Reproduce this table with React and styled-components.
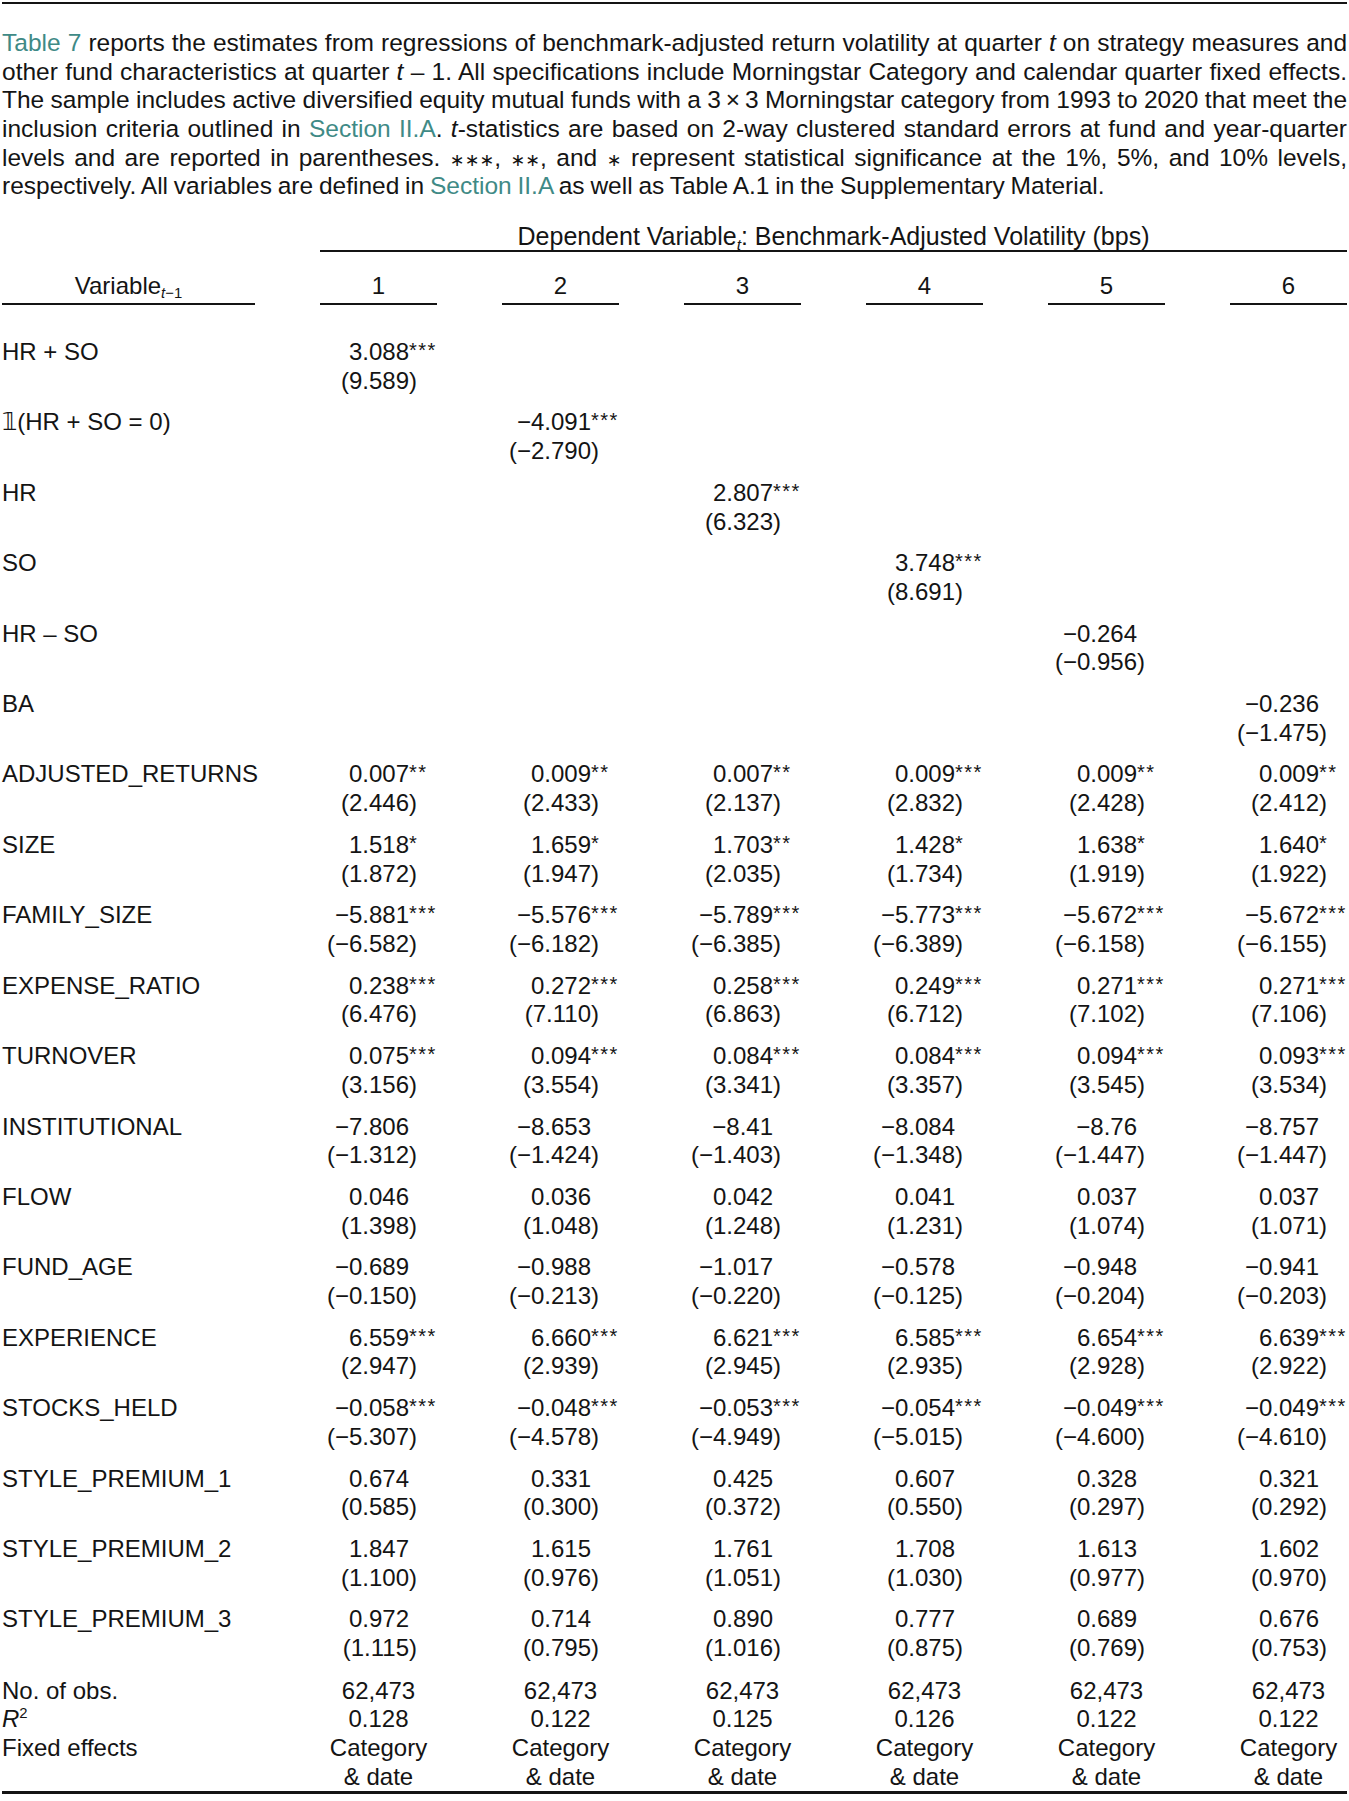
import React from "react";
import styled, { createGlobalStyle } from "styled-components";

const GlobalStyle = createGlobalStyle`
  body {
    margin: 0;
    background: #fff;
    color: #141414;
    font-family: "Liberation Sans", "DejaVu Sans", Arial, sans-serif;
  }
`;

const Page = styled.div`
  width: 1345px;
  margin: 2px 2px 0;
  border-top: 2px solid #141414;
`;

const Intro = styled.div`
  padding-top: 25px;
  font-size: 24.5px;
  line-height: 28.7px;
  word-spacing: -1px;
`;

const Line = styled.div`
  height: 28.7px;
  text-align: justify;
  text-align-last: ${({ $last }) => ($last ? "left" : "justify")};
`;

const Link = styled.span`
  color: #3f8a86;
`;

const Ast = styled.span`
  font-size: 0.72em;
  line-height: 0;
`;

const Table = styled.div`
  font-size: 24px;
  line-height: 28.7px;
`;

const Spanner = styled.div`
  margin: 20.5px 0 0 318px;
  border-bottom: 2px solid #141414;
  text-align: center;
  font-size: 25px;
`;

const Row = styled.div`
  display: grid;
  grid-template-columns: 253px repeat(6, 117px);
  column-gap: 65px;
`;

const HeaderRow = styled(Row)`
  margin-top: 20px;
`;

const HeadCell = styled.div`
  text-align: center;
  padding-bottom: 2px;
  border-bottom: 2px solid #141414;
`;

const Body = styled.div`
  padding-top: 26.5px;
`;

const BodyRow = styled(Row)`
  padding: 6.5px 0;
`;

const Label = styled.div`
  white-space: nowrap;
`;

const Cell = styled.div`
  text-align: right;
  white-space: nowrap;
`;

const Stars = styled.span`
  display: inline-block;
  width: 28px;
  text-align: left;
  font-size: 20px;
  letter-spacing: 1.5px;
  vertical-align: 3px;
  line-height: 1;
`;

const Stat = styled.div`
  padding-right: 20px;
`;

const Footer = styled.div`
  padding-top: 7.3px;
  border-bottom: 3px solid #141414;
`;

const FootCell = styled.div`
  text-align: center;
  white-space: nowrap;
`;

const Sub = styled.sub`
  font-size: 0.62em;
  vertical-align: -0.3em;
  line-height: 0;
`;

const Sup = styled.sup`
  font-size: 0.62em;
  vertical-align: 0.6em;
  line-height: 0;
`;

const M = "\u2212";

const c = (coef, stars, stat) => ({ coef, stars, stat });
const only = (i, cell) => [0, 1, 2, 3, 4, 5].map((k) => (k === i ? cell : null));

const rows = [
  { label: "HR + SO", cells: only(0, c("3.088", "***", "9.589")) },
  { label: "\u{1D7D9}(HR + SO = 0)", cells: only(1, c(`${M}4.091`, "***", `${M}2.790`)) },
  { label: "HR", cells: only(2, c("2.807", "***", "6.323")) },
  { label: "SO", cells: only(3, c("3.748", "***", "8.691")) },
  { label: "HR \u2013 SO", cells: only(4, c(`${M}0.264`, "", `${M}0.956`)) },
  { label: "BA", cells: only(5, c(`${M}0.236`, "", `${M}1.475`)) },
  {
    label: "ADJUSTED_RETURNS",
    cells: [
      c("0.007", "**", "2.446"),
      c("0.009", "**", "2.433"),
      c("0.007", "**", "2.137"),
      c("0.009", "***", "2.832"),
      c("0.009", "**", "2.428"),
      c("0.009", "**", "2.412"),
    ],
  },
  {
    label: "SIZE",
    cells: [
      c("1.518", "*", "1.872"),
      c("1.659", "*", "1.947"),
      c("1.703", "**", "2.035"),
      c("1.428", "*", "1.734"),
      c("1.638", "*", "1.919"),
      c("1.640", "*", "1.922"),
    ],
  },
  {
    label: "FAMILY_SIZE",
    cells: [
      c(`${M}5.881`, "***", `${M}6.582`),
      c(`${M}5.576`, "***", `${M}6.182`),
      c(`${M}5.789`, "***", `${M}6.385`),
      c(`${M}5.773`, "***", `${M}6.389`),
      c(`${M}5.672`, "***", `${M}6.158`),
      c(`${M}5.672`, "***", `${M}6.155`),
    ],
  },
  {
    label: "EXPENSE_RATIO",
    cells: [
      c("0.238", "***", "6.476"),
      c("0.272", "***", "7.110"),
      c("0.258", "***", "6.863"),
      c("0.249", "***", "6.712"),
      c("0.271", "***", "7.102"),
      c("0.271", "***", "7.106"),
    ],
  },
  {
    label: "TURNOVER",
    cells: [
      c("0.075", "***", "3.156"),
      c("0.094", "***", "3.554"),
      c("0.084", "***", "3.341"),
      c("0.084", "***", "3.357"),
      c("0.094", "***", "3.545"),
      c("0.093", "***", "3.534"),
    ],
  },
  {
    label: "INSTITUTIONAL",
    cells: [
      c(`${M}7.806`, "", `${M}1.312`),
      c(`${M}8.653`, "", `${M}1.424`),
      c(`${M}8.41`, "", `${M}1.403`),
      c(`${M}8.084`, "", `${M}1.348`),
      c(`${M}8.76`, "", `${M}1.447`),
      c(`${M}8.757`, "", `${M}1.447`),
    ],
  },
  {
    label: "FLOW",
    cells: [
      c("0.046", "", "1.398"),
      c("0.036", "", "1.048"),
      c("0.042", "", "1.248"),
      c("0.041", "", "1.231"),
      c("0.037", "", "1.074"),
      c("0.037", "", "1.071"),
    ],
  },
  {
    label: "FUND_AGE",
    cells: [
      c(`${M}0.689`, "", `${M}0.150`),
      c(`${M}0.988`, "", `${M}0.213`),
      c(`${M}1.017`, "", `${M}0.220`),
      c(`${M}0.578`, "", `${M}0.125`),
      c(`${M}0.948`, "", `${M}0.204`),
      c(`${M}0.941`, "", `${M}0.203`),
    ],
  },
  {
    label: "EXPERIENCE",
    cells: [
      c("6.559", "***", "2.947"),
      c("6.660", "***", "2.939"),
      c("6.621", "***", "2.945"),
      c("6.585", "***", "2.935"),
      c("6.654", "***", "2.928"),
      c("6.639", "***", "2.922"),
    ],
  },
  {
    label: "STOCKS_HELD",
    cells: [
      c(`${M}0.058`, "***", `${M}5.307`),
      c(`${M}0.048`, "***", `${M}4.578`),
      c(`${M}0.053`, "***", `${M}4.949`),
      c(`${M}0.054`, "***", `${M}5.015`),
      c(`${M}0.049`, "***", `${M}4.600`),
      c(`${M}0.049`, "***", `${M}4.610`),
    ],
  },
  {
    label: "STYLE_PREMIUM_1",
    cells: [
      c("0.674", "", "0.585"),
      c("0.331", "", "0.300"),
      c("0.425", "", "0.372"),
      c("0.607", "", "0.550"),
      c("0.328", "", "0.297"),
      c("0.321", "", "0.292"),
    ],
  },
  {
    label: "STYLE_PREMIUM_2",
    cells: [
      c("1.847", "", "1.100"),
      c("1.615", "", "0.976"),
      c("1.761", "", "1.051"),
      c("1.708", "", "1.030"),
      c("1.613", "", "0.977"),
      c("1.602", "", "0.970"),
    ],
  },
  {
    label: "STYLE_PREMIUM_3",
    cells: [
      c("0.972", "", "1.115"),
      c("0.714", "", "0.795"),
      c("0.890", "", "1.016"),
      c("0.777", "", "0.875"),
      c("0.689", "", "0.769"),
      c("0.676", "", "0.753"),
    ],
  },
];

const r2 = ["0.128", "0.122", "0.125", "0.126", "0.122", "0.122"];
const cols = [1, 2, 3, 4, 5, 6];

const Estimate = ({ cell }) =>
  cell ? (
    <Cell>
      <div>
        {cell.coef}
        <Stars>{cell.stars}</Stars>
      </div>
      <Stat>({cell.stat})</Stat>
    </Cell>
  ) : (
    <Cell />
  );

const App = () => (
  <>
    <GlobalStyle />
    <Page>
      <Intro>
        <Line>
          <Link>Table 7</Link> reports the estimates from regressions of benchmark-adjusted return
          volatility at quarter <i>t</i> on strategy measures and
        </Line>
        <Line>
          other fund characteristics at quarter <i>t</i> – 1. All specifications include Morningstar
          Category and calendar quarter fixed effects.
        </Line>
        <Line>
          The sample includes active diversified equity mutual funds with a 3{"\u2009×\u2009"}3
          Morningstar category from 1993 to 2020 that meet the
        </Line>
        <Line>
          inclusion criteria outlined in <Link>Section II.A</Link>. <i>t</i>-statistics are based on
          2-way clustered standard errors at fund and year-quarter
        </Line>
        <Line>
          levels and are reported in parentheses. <Ast>∗∗∗</Ast>, <Ast>∗∗</Ast>, and <Ast>∗</Ast>{" "}
          represent statistical significance at the 1%, 5%, and 10% levels,
        </Line>
        <Line $last>
          respectively. All variables are defined in <Link>Section II.A</Link> as well as Table A.1
          in the Supplementary Material.
        </Line>
      </Intro>

      <Table>
        <Spanner>
          Dependent Variable
          <Sub>
            <i>t</i>
          </Sub>
          : Benchmark-Adjusted Volatility (bps)
        </Spanner>
        <HeaderRow>
          <HeadCell>
            Variable
            <Sub>
              <i>t</i>
              {"\u2212"}1
            </Sub>
          </HeadCell>
          {cols.map((n) => (
            <HeadCell key={n}>{n}</HeadCell>
          ))}
        </HeaderRow>

        <Body>
          {rows.map((row) => (
            <BodyRow key={row.label}>
              <Label>{row.label}</Label>
              {row.cells.map((cell, i) => (
                <Estimate key={i} cell={cell} />
              ))}
            </BodyRow>
          ))}
        </Body>

        <Footer>
          <Row>
            <Label>No. of obs.</Label>
            {cols.map((n) => (
              <FootCell key={n}>62,473</FootCell>
            ))}
          </Row>
          <Row>
            <Label>
              <i>R</i>
              <Sup>2</Sup>
            </Label>
            {r2.map((v, i) => (
              <FootCell key={i}>{v}</FootCell>
            ))}
          </Row>
          <Row>
            <Label>Fixed effects</Label>
            {cols.map((n) => (
              <FootCell key={n}>
                Category
                <br />& date
              </FootCell>
            ))}
          </Row>
        </Footer>
      </Table>
    </Page>
  </>
);

export default App;
